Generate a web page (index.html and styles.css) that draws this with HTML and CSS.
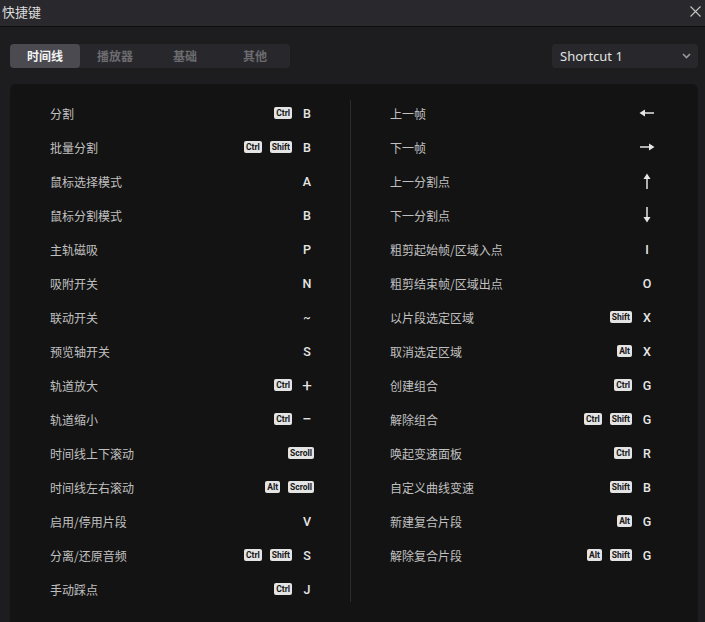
FILE: index.html
```html
<!DOCTYPE html>
<html lang="zh-CN">
<head>
<meta charset="utf-8">
<title>快捷键</title>
<link rel="stylesheet" href="styles.css">
</head>
<body>
<div class="titlebar">
  <span class="title">快捷键</span>
  <svg class="close" width="11" height="11" viewBox="0 0 11 11"><path d="M0.5 0.5L10.5 10.5M10.5 0.5L0.5 10.5" stroke="#c4c4c4" stroke-width="1.1" fill="none"/></svg>
</div>
<div class="toolbar">
  <div class="tabs">
    <div class="tab active">时间线</div>
    <div class="tab">播放器</div>
    <div class="tab">基础</div>
    <div class="tab">其他</div>
  </div>
  <div class="select">
    <span>Shortcut 1</span>
    <svg width="9" height="6" viewBox="0 0 9 6"><path d="M1 1L4.5 4.5L8 1" stroke="#9a9a9a" stroke-width="1.6" fill="none"/></svg>
  </div>
</div>
<div class="panel">
  <div class="col">
    <div class="row"><span class="label">分割</span><span class="keys"><span class="kb">Ctrl</span><span class="k">B</span></span></div>
    <div class="row"><span class="label">批量分割</span><span class="keys"><span class="kb">Ctrl</span><span class="kb">Shift</span><span class="k">B</span></span></div>
    <div class="row"><span class="label">鼠标选择模式</span><span class="keys"><span class="k">A</span></span></div>
    <div class="row"><span class="label">鼠标分割模式</span><span class="keys"><span class="k">B</span></span></div>
    <div class="row"><span class="label">主轨磁吸</span><span class="keys"><span class="k">P</span></span></div>
    <div class="row"><span class="label">吸附开关</span><span class="keys"><span class="k">N</span></span></div>
    <div class="row"><span class="label">联动开关</span><span class="keys"><span class="k tilde">~</span></span></div>
    <div class="row"><span class="label">预览轴开关</span><span class="keys"><span class="k">S</span></span></div>
    <div class="row"><span class="label">轨道放大</span><span class="keys"><span class="kb">Ctrl</span><span class="k sym">+</span></span></div>
    <div class="row"><span class="label">轨道缩小</span><span class="keys"><span class="kb">Ctrl</span><span class="k sym">−</span></span></div>
    <div class="row"><span class="label">时间线上下滚动</span><span class="keys"><span class="kb">Scroll</span></span></div>
    <div class="row"><span class="label">时间线左右滚动</span><span class="keys"><span class="kb">Alt</span><span class="kb">Scroll</span></span></div>
    <div class="row"><span class="label">启用/停用片段</span><span class="keys"><span class="k">V</span></span></div>
    <div class="row"><span class="label">分离/还原音频</span><span class="keys"><span class="kb">Ctrl</span><span class="kb">Shift</span><span class="k">S</span></span></div>
    <div class="row"><span class="label">手动踩点</span><span class="keys"><span class="kb">Ctrl</span><span class="k">J</span></span></div>
  </div>
  <div class="divider"></div>
  <div class="col">
    <div class="row"><span class="label">上一帧</span><span class="keys"><span class="k"><svg width="16" height="8" viewBox="0 0 16 8"><path d="M15 4H5" stroke="#e6e6e6" stroke-width="1.5"/><path d="M0.5 4L6 0.5V7.5Z" fill="#e6e6e6"/></svg></span></span></div>
    <div class="row"><span class="label">下一帧</span><span class="keys"><span class="k"><svg width="16" height="8" viewBox="0 0 16 8"><path d="M1 4H11" stroke="#e6e6e6" stroke-width="1.5"/><path d="M15.5 4L10 0.5V7.5Z" fill="#e6e6e6"/></svg></span></span></div>
    <div class="row"><span class="label">上一分割点</span><span class="keys"><span class="k"><svg width="8" height="16" viewBox="0 0 8 16"><path d="M4 16V5" stroke="#e6e6e6" stroke-width="1.5"/><path d="M4 0.5L7.5 6H0.5Z" fill="#e6e6e6"/></svg></span></span></div>
    <div class="row"><span class="label">下一分割点</span><span class="keys"><span class="k"><svg width="8" height="16" viewBox="0 0 8 16"><path d="M4 0V11" stroke="#e6e6e6" stroke-width="1.5"/><path d="M4 15.5L7.5 10H0.5Z" fill="#e6e6e6"/></svg></span></span></div>
    <div class="row"><span class="label">粗剪起始帧/区域入点</span><span class="keys"><span class="k">I</span></span></div>
    <div class="row"><span class="label">粗剪结束帧/区域出点</span><span class="keys"><span class="k">O</span></span></div>
    <div class="row"><span class="label">以片段选定区域</span><span class="keys"><span class="kb">Shift</span><span class="k">X</span></span></div>
    <div class="row"><span class="label">取消选定区域</span><span class="keys"><span class="kb">Alt</span><span class="k">X</span></span></div>
    <div class="row"><span class="label">创建组合</span><span class="keys"><span class="kb">Ctrl</span><span class="k">G</span></span></div>
    <div class="row"><span class="label">解除组合</span><span class="keys"><span class="kb">Ctrl</span><span class="kb">Shift</span><span class="k">G</span></span></div>
    <div class="row"><span class="label">唤起变速面板</span><span class="keys"><span class="kb">Ctrl</span><span class="k">R</span></span></div>
    <div class="row"><span class="label">自定义曲线变速</span><span class="keys"><span class="kb">Shift</span><span class="k">B</span></span></div>
    <div class="row"><span class="label">新建复合片段</span><span class="keys"><span class="kb">Alt</span><span class="k">G</span></span></div>
    <div class="row"><span class="label">解除复合片段</span><span class="keys"><span class="kb">Alt</span><span class="kb">Shift</span><span class="k">G</span></span></div>
  </div>
</div>
</body>
</html>
```

FILE: styles.css
```css
* { box-sizing: border-box; }
html, body {
  margin: 0;
  height: 100%;
  overflow: hidden;
}
body {
  background: #1d1d20;
  font-family: "Noto Sans", "Noto Sans CJK SC", sans-serif;
  color: #d0d0d0;
}
.titlebar {
  height: 27px;
  background: #28282d;
  border-bottom: 1px solid #0d0d0f;
  display: flex;
  align-items: center;
  justify-content: space-between;
  padding: 0 4px 3px 2px;
}
.title {
  font-family: "Noto Sans CJK SC", sans-serif;
  font-size: 13px;
  color: #dcdcdc;
}
.close { display: block; margin-top: 0; }
.toolbar {
  display: flex;
  justify-content: space-between;
  padding: 17px 7px 0 10px;
}
.tabs {
  display: flex;
  width: 280px;
  height: 24px;
  background: #28282c;
  border-radius: 4px;
}
.tab {
  width: 70px;
  height: 24px;
  line-height: 24px;
  text-align: center;
  font-family: "Noto Sans CJK SC", sans-serif;
  font-size: 12px;
  font-weight: 700;
  color: #6c6c70;
  border-radius: 4px;
}
.tab.active {
  background: #4a4a50;
  color: #f4f4f4;
}
.select {
  width: 146px;
  height: 24px;
  background: #28282c;
  border-radius: 4px;
  display: flex;
  align-items: center;
  justify-content: space-between;
  padding: 0 7px 0 8px;
  font-size: 13px;
  color: #e2e2e2;
}
.select svg { display: block; }
.panel {
  margin: 16px 7px 0 10px;
  background: #131313;
  border-radius: 6px;
  padding: 12px 44px 20px 40px;
  display: flex;
}
.col {
  width: 264px;
}
.divider {
  width: 1px;
  background: #2c2c2e;
  margin: 4px 39px 4px 36px;
}
.row {
  height: 34px;
  display: flex;
  align-items: center;
  justify-content: space-between;
}
.label {
  font-family: "Noto Sans CJK SC", sans-serif;
  font-size: 12px;
  color: #c0c0c0;
}
.keys {
  display: flex;
  align-items: center;
  gap: 8px;
}
.kb {
  height: 12px;
  line-height: 12px;
  padding: 0 2px;
  background: #e4e4e4;
  color: #161616;
  border-radius: 2px;
  font-family: Roboto, sans-serif;
  font-weight: 700;
  font-size: 8.5px;
}
.k {
  width: 14px;
  text-align: center;
  font-family: Roboto, sans-serif;
  font-weight: 500;
  font-size: 12.5px;
  color: #e6e6e6;
  display: flex;
  justify-content: center;
  align-items: center;
}
.k svg { display: block; flex: none; }
.k.sym { font-size: 17px; font-weight: 400; }
.k.tilde { font-size: 11px; }
```
